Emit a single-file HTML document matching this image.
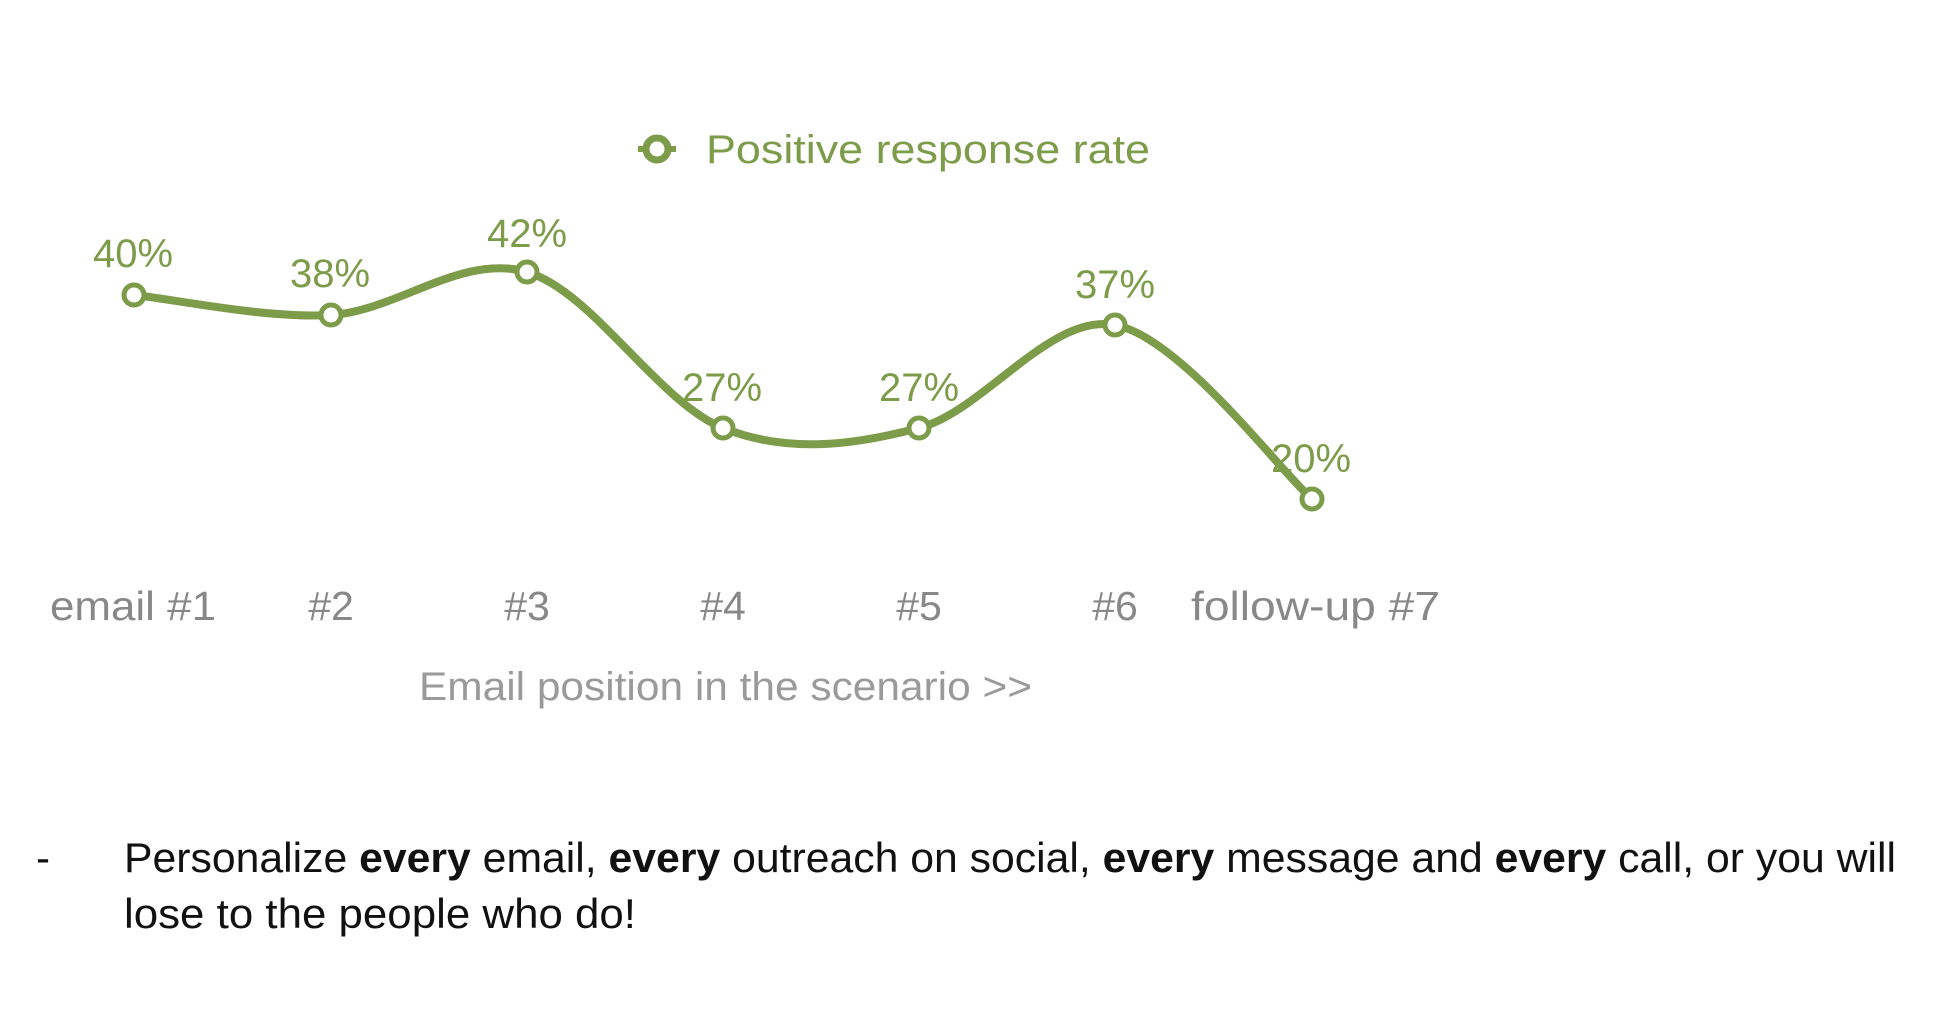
<!DOCTYPE html>
<html><head><meta charset="utf-8"><style>
html,body{margin:0;padding:0;background:#fff;width:1940px;height:1016px;overflow:hidden}
svg{display:block}
</style></head><body>
<svg width="1940" height="1016" viewBox="0 0 1940 1016" xmlns="http://www.w3.org/2000/svg">
<g font-family="Liberation Sans, sans-serif" fill="#7d9c4a">
<line x1="638" y1="149" x2="676" y2="149" stroke="#7d9c4a" stroke-width="6"/>
<circle cx="657" cy="149" r="11" fill="#fff" stroke="#7d9c4a" stroke-width="7"/>
<text x="706" y="163" font-size="40" textLength="444" lengthAdjust="spacingAndGlyphs">Positive response rate</text>
</g>
<path d="M134,295 C167,298 266,319 331,315 C397,311 462,253 527,272 C592,291 658,402 723,428 C788,454 854,445 919,428 C984,411 1050,313 1115,325 C1180,337 1279,470 1312,499" fill="none" stroke="#7d9c4a" stroke-width="8" stroke-linecap="round"/>
<g fill="#fff" stroke="#7d9c4a" stroke-width="5">
<circle cx="134" cy="295" r="10"/><circle cx="331" cy="315" r="10"/><circle cx="527" cy="272" r="10"/>
<circle cx="723" cy="428" r="10"/><circle cx="919" cy="428" r="10"/><circle cx="1115" cy="325" r="10"/><circle cx="1312" cy="499" r="10"/>
</g>
<g font-family="Liberation Sans, sans-serif" fill="#7d9c4a" font-size="40" text-anchor="middle">
<text x="133" y="267">40%</text><text x="330" y="287">38%</text><text x="527" y="247">42%</text>
<text x="722" y="401">27%</text><text x="919" y="401">27%</text><text x="1115" y="298">37%</text><text x="1311" y="472">20%</text>
</g>
<g font-family="Liberation Sans, sans-serif" fill="#888" font-size="41">
<text x="50" y="620" textLength="166" lengthAdjust="spacingAndGlyphs">email #1</text>
<text x="331" y="620" text-anchor="middle">#2</text>
<text x="527" y="620" text-anchor="middle">#3</text>
<text x="723" y="620" text-anchor="middle">#4</text>
<text x="919" y="620" text-anchor="middle">#5</text>
<text x="1115" y="620" text-anchor="middle">#6</text>
<text x="1191" y="620" textLength="249" lengthAdjust="spacingAndGlyphs">follow-up #7</text>
</g>
<text x="419" y="700" font-family="Liberation Sans, sans-serif" fill="#9a9a9a" font-size="40" textLength="613" lengthAdjust="spacingAndGlyphs">Email position in the scenario &gt;&gt;</text>
<g font-family="Liberation Sans, sans-serif" fill="#111" font-size="42">
<text x="36" y="872">-</text>
<text x="124" y="872" textLength="1772" lengthAdjust="spacingAndGlyphs">Personalize <tspan font-weight="bold">every</tspan> email, <tspan font-weight="bold">every</tspan> outreach on social, <tspan font-weight="bold">every</tspan> message and <tspan font-weight="bold">every</tspan> call, or you will</text>
<text x="124" y="928" textLength="512" lengthAdjust="spacingAndGlyphs">lose to the people who do!</text>
</g>
</svg>
</body></html>
